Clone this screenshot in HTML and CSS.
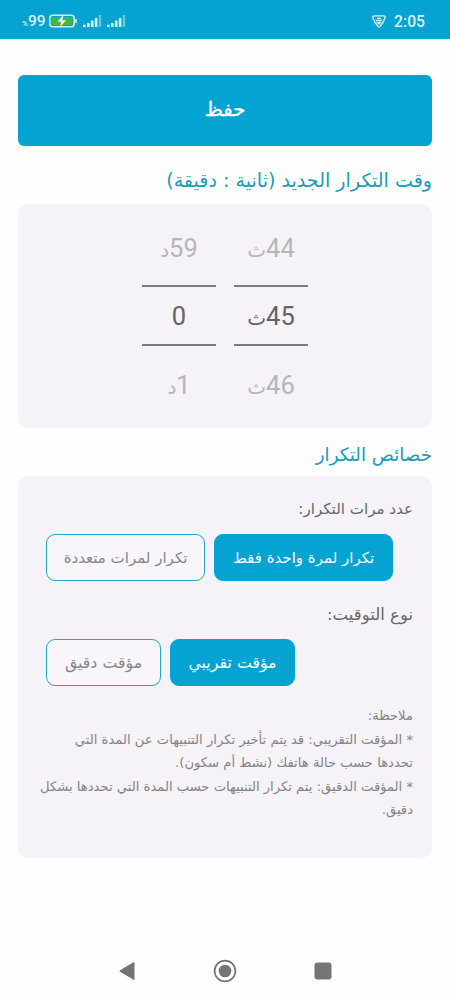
FILE: index.html
```html
<!DOCTYPE html>
<html lang="ar" dir="rtl">
<head>
    <meta charset="UTF-8">
    <meta name="viewport" content="width=device-width, initial-scale=1.0">
    <title>إعدادات التكرار</title>
    <link rel="stylesheet" href="styles.css">
</head>
<body>
    <header class="status-bar" dir="ltr">
        <div class="status-group">
            <span class="battery-text"><small>%</small>99</span>
            <svg class="battery" width="29" height="14" viewBox="0 0 29 14">
                <rect x="0.8" y="1.3" width="24.4" height="11.4" rx="3" fill="none" stroke="#d5f3f5" stroke-width="1.5"/>
                <rect x="2.4" y="2.9" width="21.2" height="8.2" rx="1.5" fill="#43b649"/>
                <path d="M27 5v4" stroke="#d5f3f5" stroke-width="1.6"/>
                <path d="M14.6 0.6 8.6 7.8h3.6l-1.4 5.8 6.2-7.4h-3.6z" fill="#e8fbff"/>
            </svg>
            <svg class="signal" width="19" height="12" viewBox="0 0 19 12">
                <path d="M1.4 12V9.7M5.3 12V8M9.2 12V5.5M13.1 12V3" stroke="#d5f5fb" stroke-width="2.6"/>
                <path d="M17 12V0" stroke="#63c6e2" stroke-width="2.4"/>
            </svg>
            <svg class="signal" width="19" height="12" viewBox="0 0 19 12">
                <path d="M1.4 12V9.7M5.3 12V8M9.2 12V5.5M13.1 12V3" stroke="#d5f5fb" stroke-width="2.6"/>
                <path d="M17 12V0" stroke="#63c6e2" stroke-width="2.4"/>
            </svg>
        </div>
        <div class="status-group">
            <svg class="shield" width="14" height="13" viewBox="0 0 14 13" fill="none" stroke="#d5f5fb" stroke-width="1.3">
                <path d="M2 0.8h10q1.7 0.4 1 2.2Q11.4 8.2 7.7 11.8 7 12.4 6.3 11.8 2.6 8.2 1 3 0.3 1.2 2 0.8z"/>
                <path d="M5 3.3h4M3.8 5.3h6.4M5.5 7.5h3L7 9z"/>
            </svg>
            <span class="clock">2:05</span>
        </div>
    </header>

    <main class="page">
        <button class="save-btn">حفظ</button>

        <h2 class="section-title">وقت التكرار الجديد (ثانية : دقيقة)</h2>
        <section class="card picker">
            <div class="wheel">
                <div class="wheel-item">44<span class="unit">ث</span></div>
                <div class="wheel-item selected">45<span class="unit">ث</span></div>
                <div class="wheel-item">46<span class="unit">ث</span></div>
            </div>
            <div class="wheel">
                <div class="wheel-item">59<span class="unit">د</span></div>
                <div class="wheel-item selected">0</div>
                <div class="wheel-item">1<span class="unit">د</span></div>
            </div>
        </section>

        <h2 class="section-title">خصائص التكرار</h2>
        <section class="card options">
            <h3 class="option-label label-count">عدد مرات التكرار:</h3>
            <div class="chips">
                <button class="chip chip-once active">تكرار لمرة واحدة فقط</button>
                <button class="chip chip-many">تكرار لمرات متعددة</button>
            </div>
            <h3 class="option-label">نوع التوقيت:</h3>
            <div class="chips">
                <button class="chip chip-approx active">مؤقت تقريبي</button>
                <button class="chip chip-exact">مؤقت دقيق</button>
            </div>
            <p class="notes">
                ملاحظة:<br>
                * المؤقت التقريبي: قد يتم تأخير تكرار التنبيهات عن المدة التي<br>
                تحددها حسب حالة هاتفك (نشط أم سكون).<br>
                * المؤقت الدقيق: يتم تكرار التنبيهات حسب المدة التي تحددها بشكل<br>
                دقيق.
            </p>
        </section>
    </main>

    <nav class="nav-bar" dir="ltr">
        <svg width="24" height="24" viewBox="0 0 24 24"><path d="M5 11.2 18.5 3.2q1-.5 1 .6v16.4q0 1.1-1 .6L5 12.8q-1-.8 0-1.6z" fill="#757575"/></svg>
        <svg width="24" height="24" viewBox="0 0 24 24"><circle cx="12" cy="12" r="10.4" fill="none" stroke="#757575" stroke-width="1.7"/><circle cx="12" cy="12" r="6.3" fill="#757575"/></svg>
        <svg width="24" height="24" viewBox="0 0 24 24"><rect x="3.5" y="3.5" width="17" height="17" rx="3" fill="#757575"/></svg>
    </nav>
</body>
</html>
```
FILE: styles.css
```css
* {
    margin: 0;
    padding: 0;
    box-sizing: border-box;
}

body {
    display: flex;
    flex-direction: column;
    height: 1000px;
    overflow: hidden;
    background: #fefefe;
    font-family: "DejaVu Sans", sans-serif;
}

.status-bar {
    display: flex;
    justify-content: space-between;
    align-items: center;
    height: 39px;
    padding: 3px 25px 0 22px;
    background: #04a3d2;
    color: #d5f5fb;
    font-family: Roboto, sans-serif;
    font-weight: 500;
}

.status-group {
    display: flex;
    align-items: center;
}

.battery-text {
    font-size: 15.5px;
}

.battery-text small {
    font-size: 8px;
}

.battery {
    margin-left: 3px;
}

.signal {
    margin-left: 5px;
}

.clock {
    margin-left: 8px;
    font-size: 15.7px;
}

.page {
    flex: 1;
    padding: 36px 18px 0;
}

.save-btn {
    display: block;
    width: 100%;
    height: 71px;
    padding-bottom: 2px;
    border: none;
    border-radius: 6px;
    background: #04a3d2;
    color: #fff;
    font-family: inherit;
    font-size: 19.5px;
    -webkit-text-stroke: 0.4px #fff;
}

.section-title {
    height: 58px;
    padding-top: 6px;
    color: #1b9cba;
    font-size: 19.1px;
    font-weight: 400;
    line-height: 58px;
    white-space: nowrap;
}

.card {
    border-radius: 10px;
    background: #f5f3f7;
}

.picker {
    display: flex;
    justify-content: center;
    gap: 18px;
    height: 224px;
    padding-top: 10px;
}

.wheel {
    width: 74px;
    color: #b7b5b9;
    font-family: Roboto, "DejaVu Sans", sans-serif;
    font-size: 25.5px;
    text-align: center;
}

.wheel-item {
    height: 71px;
    line-height: 68px;
}

.wheel-item:last-child {
    line-height: 78px;
}

.wheel-item.selected {
    height: 61px;
    border-top: 2px solid #7d7a80;
    border-bottom: 2px solid #7d7a80;
    line-height: 59px;
    color: #656367;
}

.unit {
    font-size: 20px;
    line-height: 1;
}

.picker + .section-title {
    height: 48px;
    padding-top: 0;
    font-size: 18.3px;
    line-height: 53px;
}

.options {
    height: 382px;
    padding: 10px 19px 0;
}

.option-label {
    height: 48px;
    color: #68666a;
    font-size: 16.5px;
    font-weight: 400;
    line-height: 47px;
}

.label-count {
    font-size: 15.1px;
}

.chips {
    display: flex;
    justify-content: flex-end;
    gap: 9px;
    height: 57px;
    padding-left: 9px;
}

.chip {
    height: 47px;
    border: 1.5px solid #27a5c4;
    border-radius: 9px;
    background: #f8f6fa;
    color: #89878b;
    font-family: inherit;
    font-size: 15px;
    white-space: nowrap;
}

.chip.active {
    border-color: #04a3d2;
    background: #04a3d2;
    color: #fff;
}

.chip-once {
    width: 179px;
}

.chip-many {
    width: 159px;
}

.chip-approx {
    width: 125px;
    font-size: 15.8px;
}

.chip-exact {
    width: 115px;
    font-size: 15.8px;
}

.notes {
    margin-top: 8px;
    color: #858387;
    font-size: 13.15px;
    line-height: 23.5px;
    white-space: nowrap;
}

.nav-bar {
    display: flex;
    justify-content: center;
    gap: 74px;
    height: 41px;
}
```
